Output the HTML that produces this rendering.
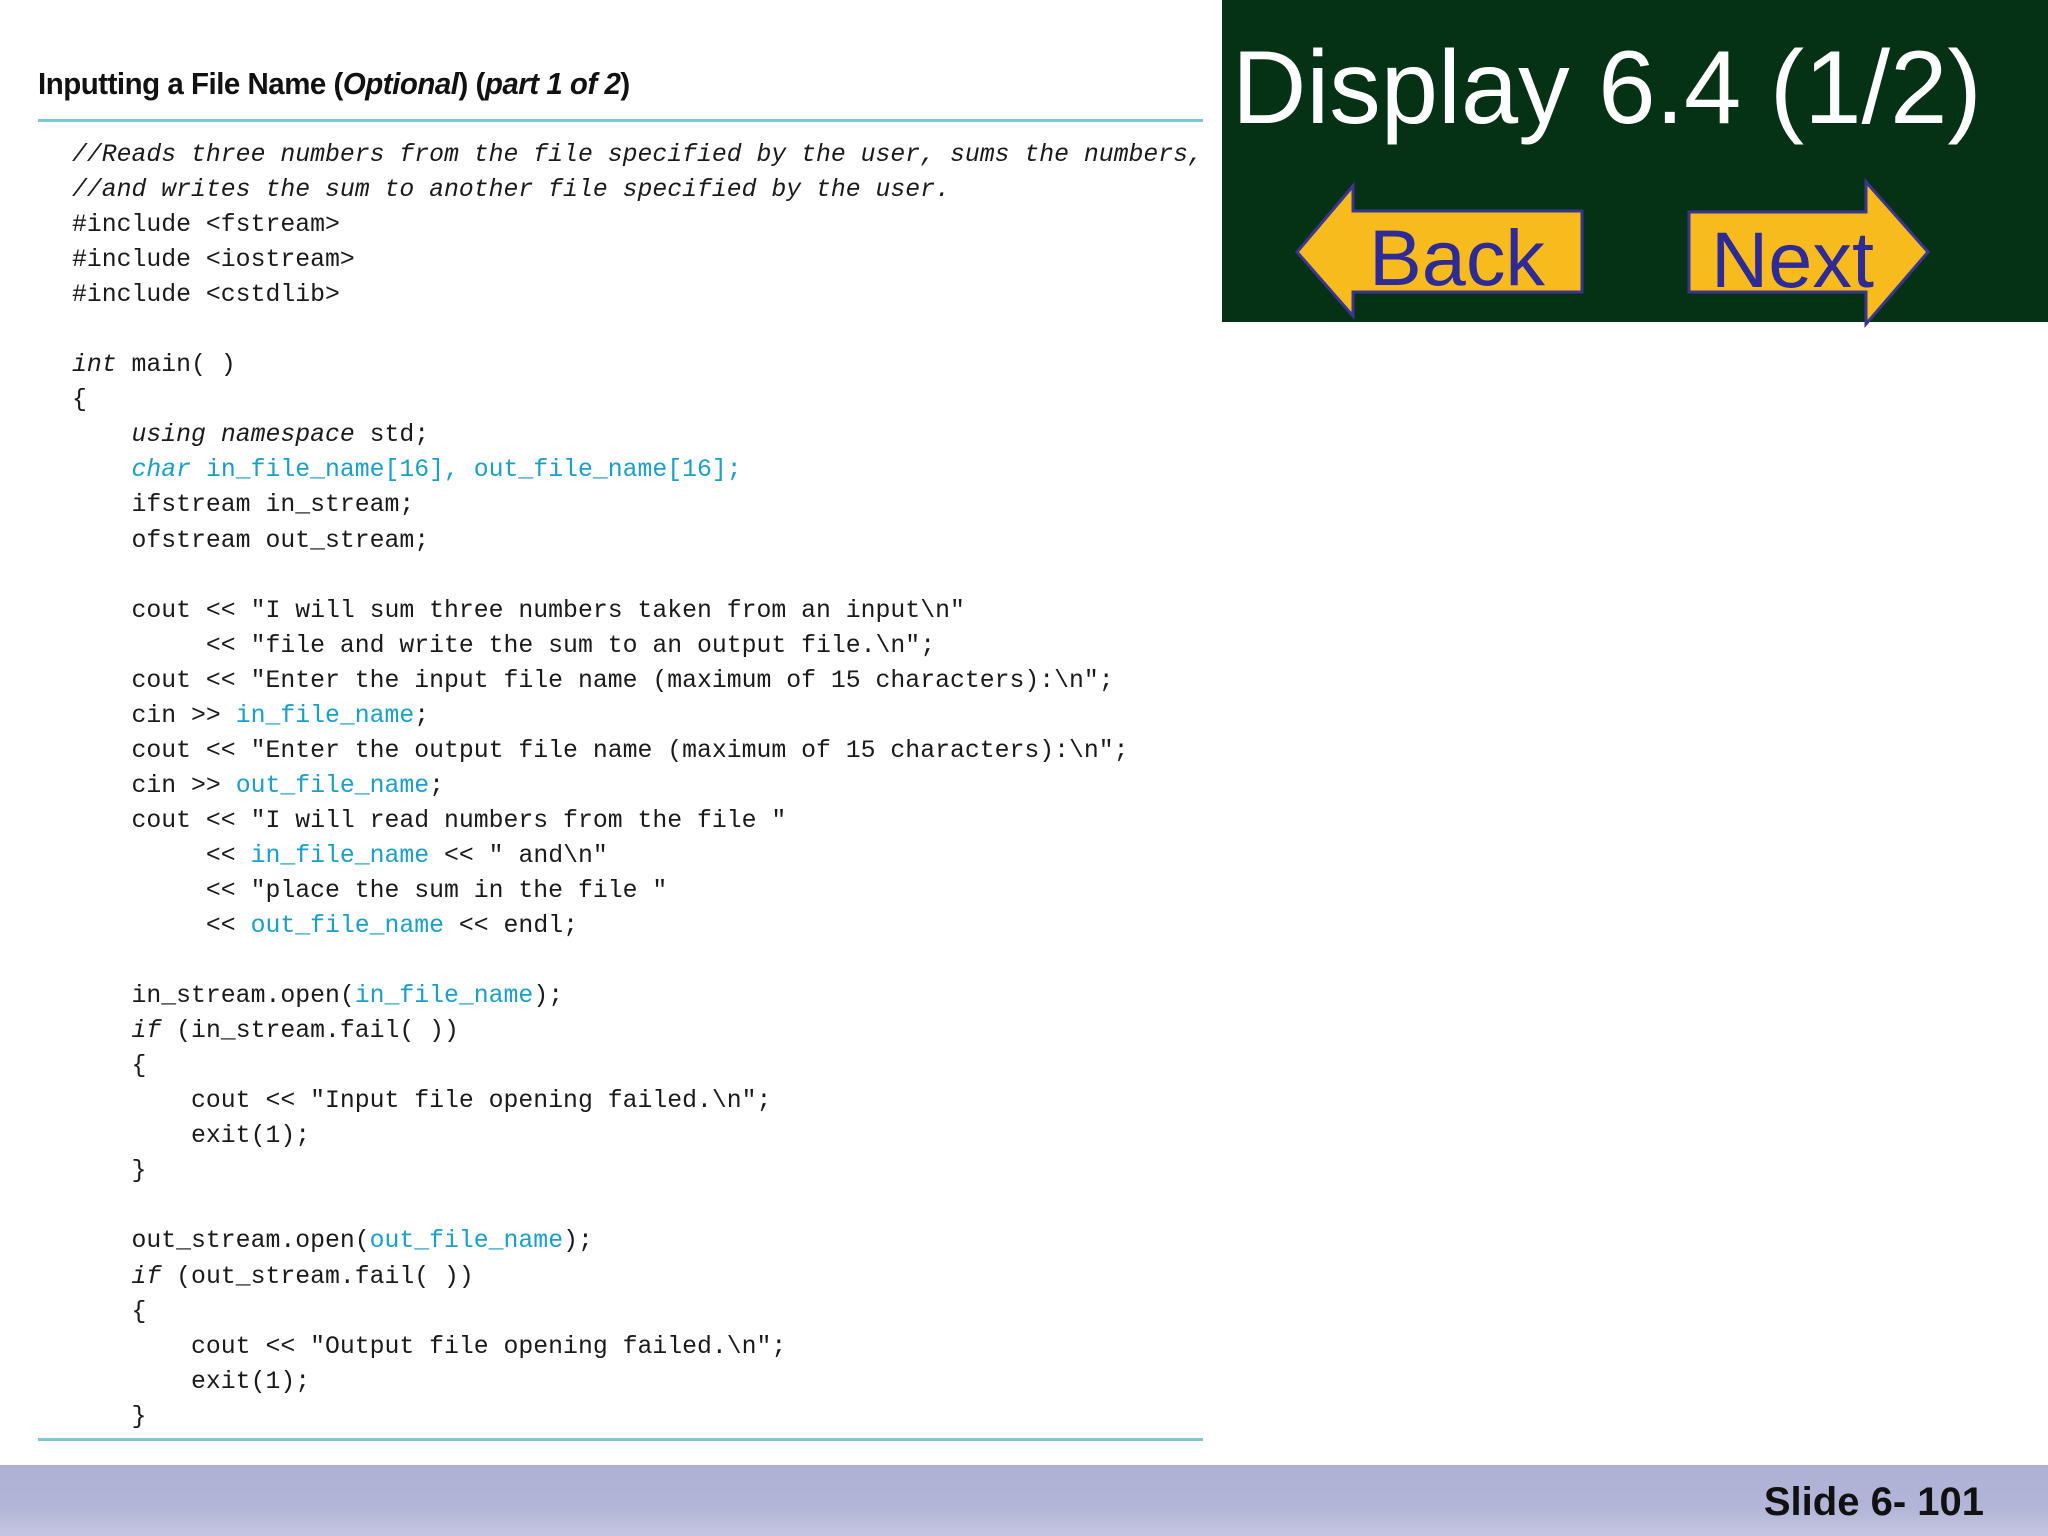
<!DOCTYPE html>
<html><head><meta charset="utf-8"><style>
html,body{margin:0;padding:0;width:2048px;height:1536px;overflow:hidden;background:#fff;position:relative;font-family:"Liberation Sans",sans-serif}
.hd{position:absolute;left:38px;top:66px;font:bold 31px "Liberation Sans",sans-serif;color:#111;letter-spacing:-0.5px;transform:scaleX(0.95);transform-origin:left;white-space:nowrap}
.rule{position:absolute;left:38px;width:1165px;height:3px;background:#7cc8d2}
pre{position:absolute;left:72px;top:138px;margin:0;font:24.8px/35.05px "Liberation Mono",monospace;color:#1a1a1a}
.c{color:#1a9fc9}
i{font-style:italic}
.green{position:absolute;left:1222px;top:0;width:826px;height:322px;background:#053214}
.title{position:absolute;left:1232px;top:36px;font:104px/1 "Liberation Sans",sans-serif;color:#fff;white-space:nowrap;transform:scaleX(0.99);transform-origin:left}
.footer{position:absolute;left:0;top:1465px;width:2048px;height:71px;background:linear-gradient(#aeb0d4,#b3b5d8 60%,#c4c6e0)}
.slide{position:absolute;right:64px;top:1480px;font:bold 40px "Liberation Sans",sans-serif;color:#111}
</style></head><body>
<div class="hd">Inputting a File Name (<i>Optional</i>) (<i>part 1 of 2</i>)</div>
<div class="rule" style="top:119px"></div>
<div class="rule" style="top:1438px"></div>
<pre><i>//Reads three numbers from the file specified by the user, sums the numbers,</i>
<i>//and writes the sum to another file specified by the user.</i>
#include &lt;fstream&gt;
#include &lt;iostream&gt;
#include &lt;cstdlib&gt;

<i>int</i> main( )
{
    <i>using namespace</i> std;
    <span class="c"><i>char</i> in_file_name[16], out_file_name[16];</span>
    ifstream in_stream;
    ofstream out_stream;

    cout &lt;&lt; "I will sum three numbers taken from an input\n"
         &lt;&lt; "file and write the sum to an output file.\n";
    cout &lt;&lt; "Enter the input file name (maximum of 15 characters):\n";
    cin &gt;&gt; <span class="c">in_file_name</span>;
    cout &lt;&lt; "Enter the output file name (maximum of 15 characters):\n";
    cin &gt;&gt; <span class="c">out_file_name</span>;
    cout &lt;&lt; "I will read numbers from the file "
         &lt;&lt; <span class="c">in_file_name</span> &lt;&lt; " and\n"
         &lt;&lt; "place the sum in the file "
         &lt;&lt; <span class="c">out_file_name</span> &lt;&lt; endl;

    in_stream.open(<span class="c">in_file_name</span>);
    <i>if</i> (in_stream.fail( ))
    {
        cout &lt;&lt; "Input file opening failed.\n";
        exit(1);
    }

    out_stream.open(<span class="c">out_file_name</span>);
    <i>if</i> (out_stream.fail( ))
    {
        cout &lt;&lt; "Output file opening failed.\n";
        exit(1);
    }</pre>
<div class="green"></div>
<div class="title">Display 6.4 (1/2)</div>
<svg style="position:absolute;left:0;top:0" width="2048" height="330">
<polygon points="1297,252 1353,186 1353,211 1582,211 1582,292 1353,292 1353,316" fill="#f7bb1e" stroke="#3a3590" stroke-width="3"/>
<polygon points="1689,212 1866,212 1866,182 1928,252 1866,324 1866,292 1689,292" fill="#f7bb1e" stroke="#3a3590" stroke-width="3"/>
<text x="1369" y="285" font-family="Liberation Sans" font-size="79" fill="#2e2b96" textLength="176" lengthAdjust="spacingAndGlyphs">Back</text>
<text x="1711" y="287" font-family="Liberation Sans" font-size="79" fill="#2e2b96" textLength="163" lengthAdjust="spacingAndGlyphs">Next</text>
</svg>
<div class="footer"></div>
<div class="slide">Slide 6- 101</div>
</body></html>
